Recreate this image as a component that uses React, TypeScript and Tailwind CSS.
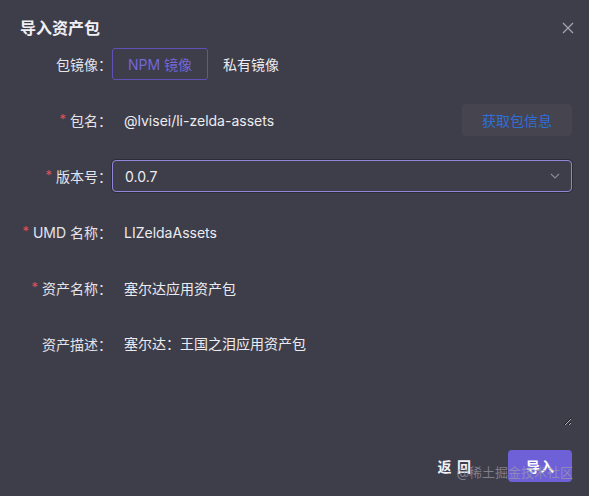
import type { ReactNode } from "react"

const font = { fontFamily: '"Inter", "Noto Sans CJK SC", sans-serif' }

type RowProps = {
  label: string
  required?: boolean
  children: ReactNode
}

function FormRow({ label, required, children }: RowProps) {
  return (
    <div className="flex items-start">
      <div className="w-[92px] h-8 flex items-center justify-end text-[14px] text-[#e4e4ea] whitespace-nowrap">
        {required && <span className="text-[#e0505a] mr-1 text-[13px]">*</span>}
        {label}
      </div>
      <div className="flex-1 min-w-0">{children}</div>
    </div>
  )
}

function Value({ children }: { children: ReactNode }) {
  return <div className="h-8 flex items-center pl-3 text-[14px] text-[#ececf0]">{children}</div>
}

export default function App() {
  return (
    <div className="relative w-full min-h-screen bg-[#3e3d4a] overflow-hidden" style={font}>
      <div className="pl-5 pr-[17px] pt-4 pb-[14px]">
        <div className="flex items-center justify-between h-6">
          <h2 className="text-[16px] font-semibold text-[#f0f0f4]">导入资产包</h2>
          <button type="button" className="mr-[-2px] text-[#a3a3ad]">
            <svg width="12" height="12" viewBox="0 0 12 12" fill="none" stroke="currentColor" strokeWidth="1.3">
              <path d="M1 1 L11 11 M11 1 L1 11" />
            </svg>
          </button>
        </div>

        <div className="mt-2 flex flex-col gap-6">
          <FormRow label="包镜像：">
            <div className="flex items-center">
              <button type="button" className="h-8 px-[15px] rounded-[3px] border border-[#5f52b6] text-[14px] text-[#7467d6]">
                NPM 镜像
              </button>
              <button type="button" className="h-8 px-[15px] text-[14px] text-[#ececf0]">
                私有镜像
              </button>
            </div>
          </FormRow>

          <FormRow label="包名：" required>
            <div className="flex items-center justify-between">
              <Value>@lvisei/li-zelda-assets</Value>
              <button type="button" className="h-8 w-[110px] rounded-[4px] bg-[#45444f] text-[14px] text-[#2f6fd8]">
                获取包信息
              </button>
            </div>
          </FormRow>

          <FormRow label="版本号：" required>
            <div className="h-8 rounded-[4px] border border-[#9185d8] ring-1 ring-[#2c2b36] flex items-center justify-between pl-3 pr-[10px]">
              <span className="text-[14px] text-[#ececf0]">0.0.7</span>
              <svg width="12" height="12" viewBox="0 0 12 12" fill="none" stroke="#8c8b96" strokeWidth="1.1">
                <path d="M2 4 L6 8 L10 4" />
              </svg>
            </div>
          </FormRow>

          <FormRow label="UMD 名称：" required>
            <Value>LIZeldaAssets</Value>
          </FormRow>

          <FormRow label="资产名称：" required>
            <Value>塞尔达应用资产包</Value>
          </FormRow>

          <FormRow label="资产描述：">
            <textarea
              className="block w-full h-[98px] bg-transparent outline-none resize-y px-3 py-[5px] text-[14px] leading-[22px] text-[#ececf0]"
              defaultValue="塞尔达：王国之泪应用资产包"
            />
          </FormRow>
        </div>

        <div className="mt-6 flex items-center justify-end gap-9">
          <button type="button" className="text-[14px] font-semibold text-[#f2f2f6] tracking-[1px]">
            返 回
          </button>
          <button type="button" className="h-8 w-16 rounded-[4px] bg-[#6e61d8] text-[14px] font-semibold text-white">
            导入
          </button>
        </div>
      </div>

      <div className="absolute right-[16px] bottom-[14px] text-[13px] text-[#9d9ca8]/70 pointer-events-none">
        @稀土掘金技术社区
      </div>
    </div>
  )
}
